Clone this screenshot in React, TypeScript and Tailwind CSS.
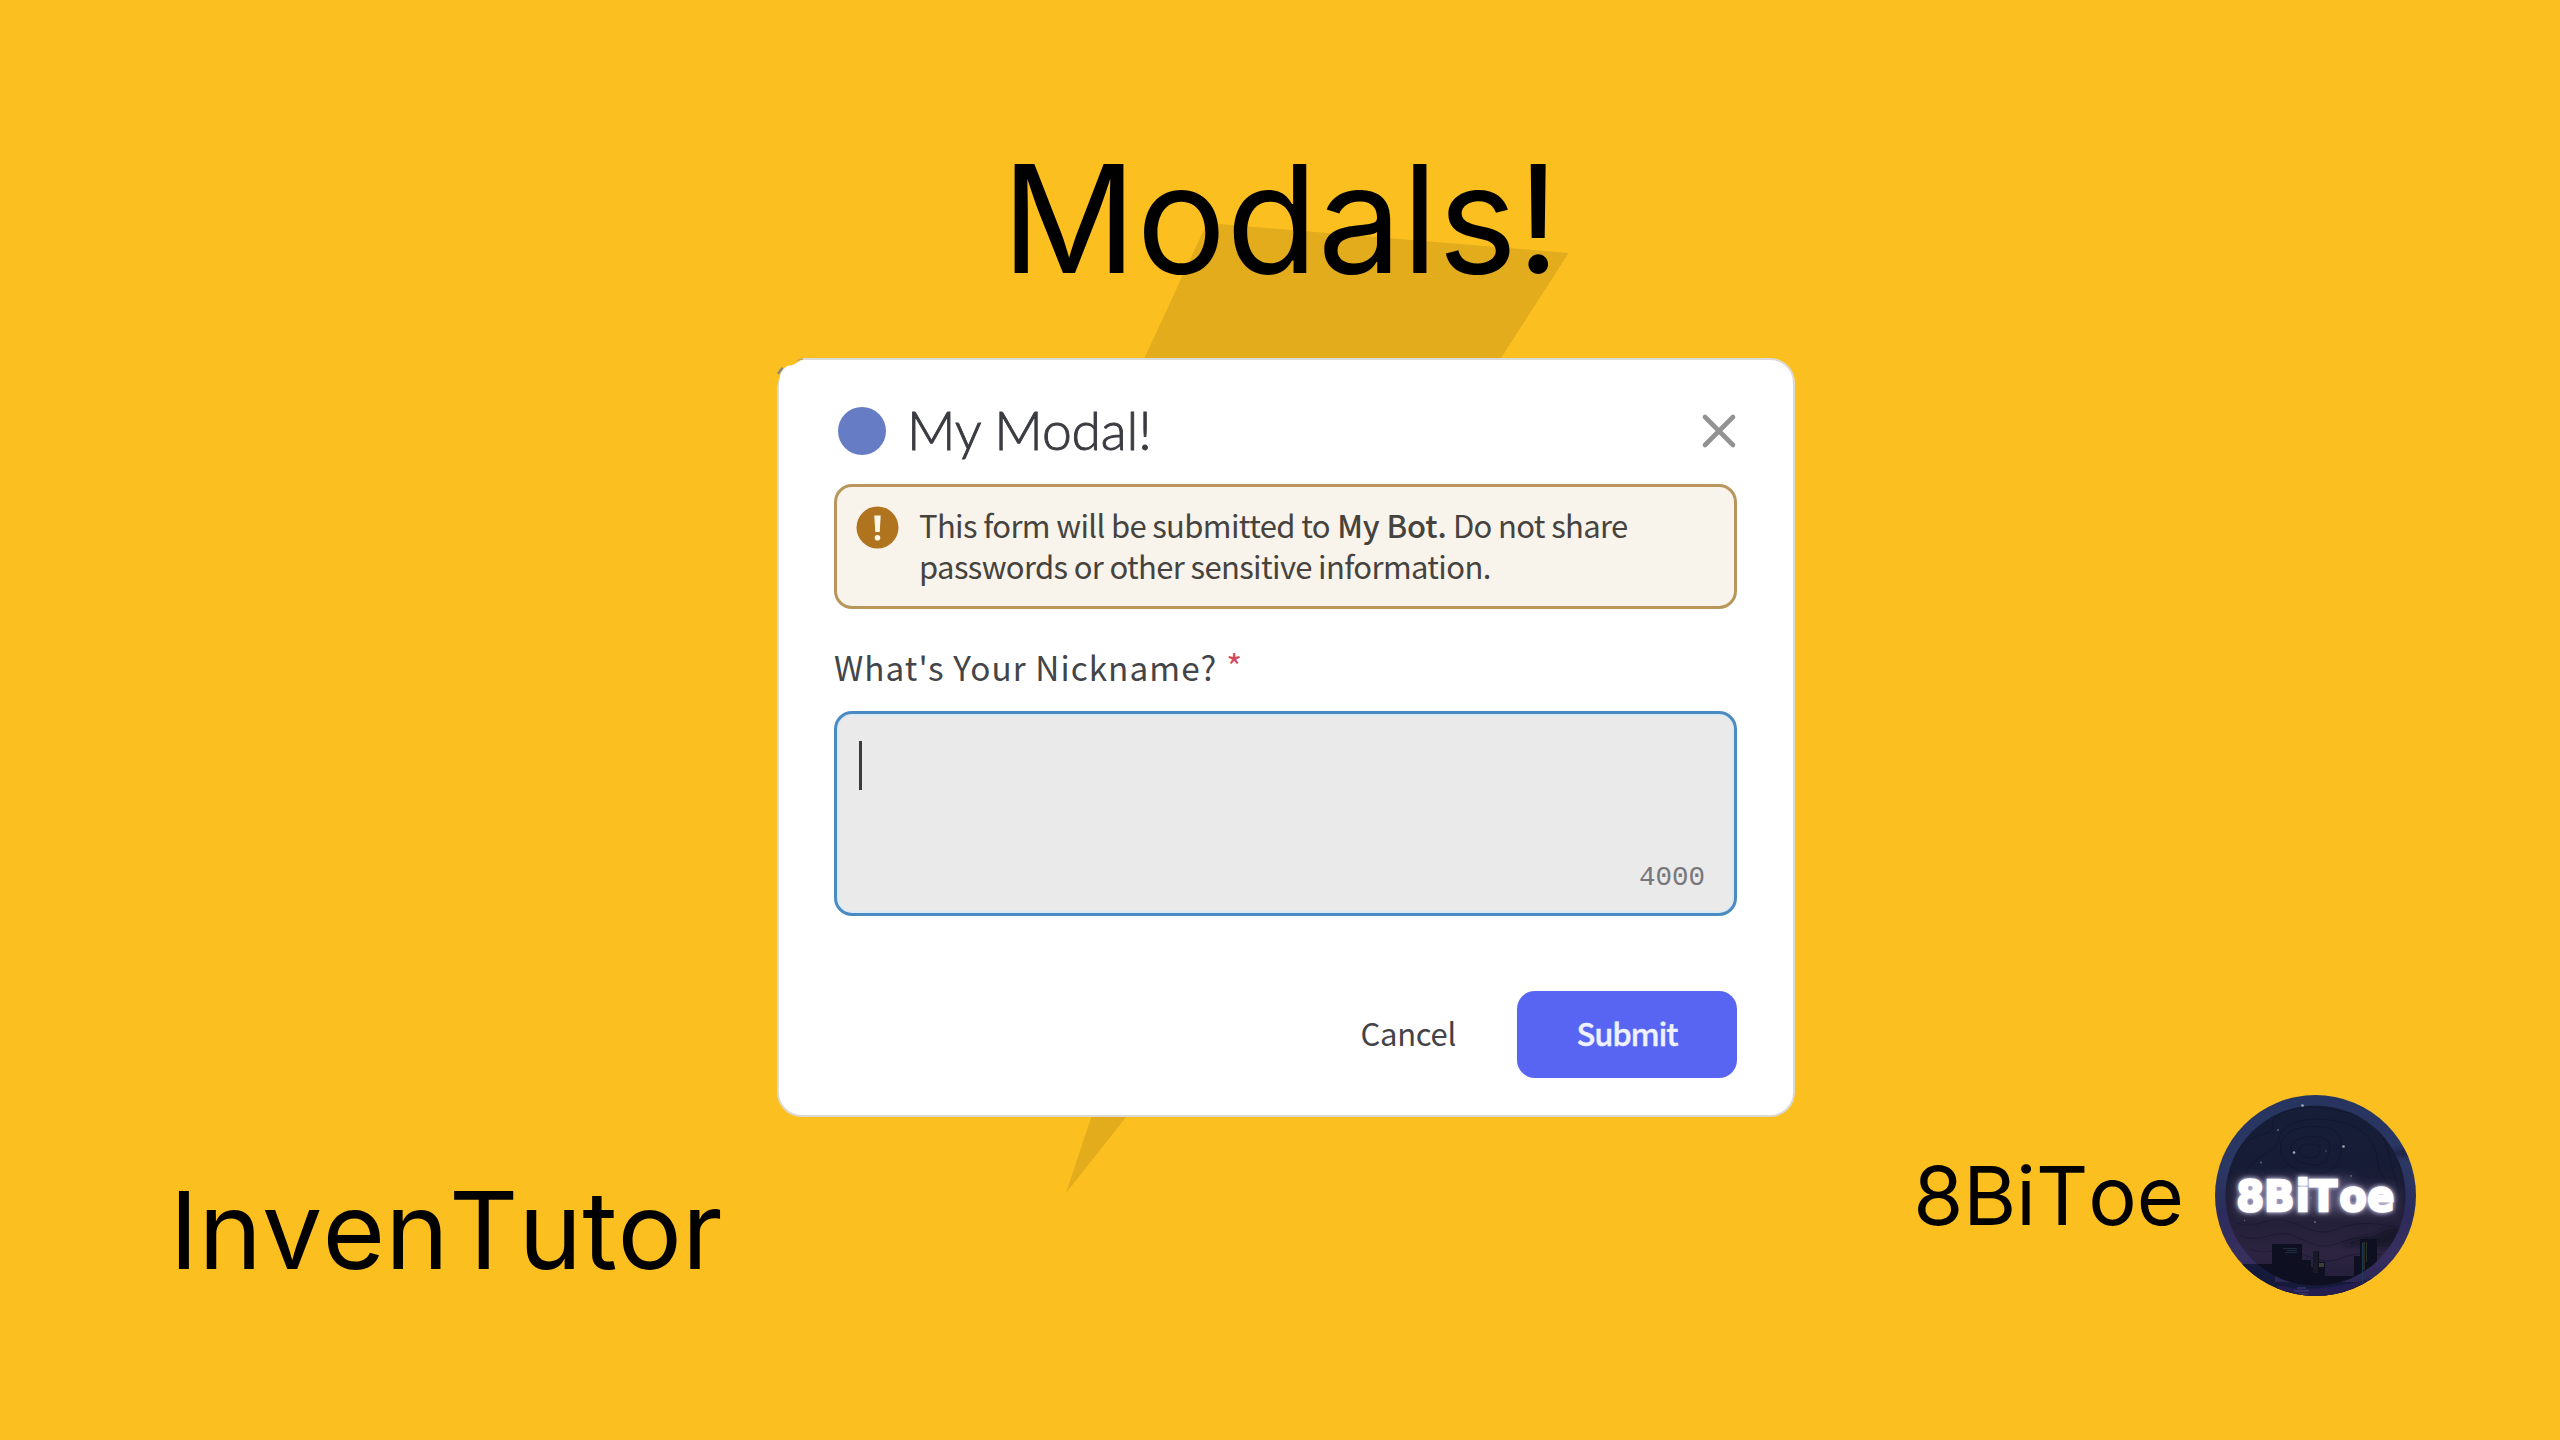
import React from 'react';

const stars: [number, number, number][] = [
  [87.5, 10.5, 1.3], [63, 35, 1], [79, 57.5, 1.3], [128.5, 51.5, 1.3], [46, 67.5, 1],
  [111, 56, 0.7], [136, 81, 0.9], [100, 127, 1], [29.5, 125.5, 0.7], [96, 103, 0.7],
];

const contours = [
  'M20 60c18-30 40-12 38-34 10-16 42-16 66-10 30 4 46 22 50 44 4 20 8 24 10 40',
  'M30 78c14-24 34-18 34-36 6-18 34-20 56-16 28 4 40 20 42 38 2 20 14 22 16 40',
  'M66 48c4-14 24-18 40-16 18 0 22 12 20 24s-6 22-24 22-40-8-36-30z',
  'M76 52c2-8 14-12 26-10 12 0 14 8 12 16s-6 12-16 12-24-6-22-18z',
  'M84 54c2-4 8-6 14-5 7 0 8 4 7 8s-4 6-9 6-14-3-12-9z',
  'M22 128c20 8 30-8 50-2s30 16 50 8 40-6 56-2',
  'M24 140c22 10 34-6 52 0s28 16 48 8 36-6 48-2',
  'M34 154c20 8 30-4 46 2s28 14 44 8 30-8 42-4',
];

function Avatar() {
  return (
    <svg className="block size-[201px]" viewBox="0 0 201 201" aria-label="8BiToe avatar">
      <defs>
        <linearGradient id="ring" x1="0" y1="0" x2="0" y2="1">
          <stop offset="0" stopColor="#26345f" />
          <stop offset="0.35" stopColor="#2b3864" />
          <stop offset="0.6" stopColor="#2c2c5c" />
          <stop offset="0.8" stopColor="#38305f" />
          <stop offset="1" stopColor="#252150" />
        </linearGradient>
        <linearGradient id="sky" x1="0" y1="0" x2="0" y2="1">
          <stop offset="0" stopColor="#151e38" />
          <stop offset="0.35" stopColor="#171c35" />
          <stop offset="0.6" stopColor="#231f38" />
          <stop offset="0.78" stopColor="#2c2440" />
          <stop offset="1" stopColor="#211c38" />
        </linearGradient>
        <clipPath id="outer"><circle cx="100.5" cy="100.5" r="100.5" /></clipPath>
        <clipPath id="inner"><circle cx="100.5" cy="100.5" r="90" /></clipPath>
        <filter id="soft" x="-30%" y="-60%" width="160%" height="220%"><feGaussianBlur stdDeviation="6" /></filter>
        <filter id="glow" x="-20%" y="-40%" width="140%" height="180%"><feGaussianBlur stdDeviation="2.2" /></filter>
      </defs>
      <g clipPath="url(#outer)">
        <rect width="201" height="201" fill="url(#ring)" />
        <ellipse cx="192" cy="58" rx="16" ry="4" fill="#1d2345" filter="url(#glow)" />
        <path d="M0 169h60v18h140v14H0z" fill="#151a3a" />
        <path d="M62 190c30 8 60 2 100-8l-20 19H62z" fill="#241e4e" />
        <path d="M82 193h9M79 196h15M84 199h9" stroke="#4a4c86" strokeWidth="0.8" />
        <g clipPath="url(#inner)">
          <rect width="201" height="201" fill="url(#sky)" />
          <g fill="none" stroke="#0c1126" strokeWidth="0.7" opacity="0.55">
            {contours.map((d) => <path key={d} d={d} />)}
          </g>
          <path d="M128 150c14-8 26-6 36-12s20-6 26-4v16c-16 4-40 0-62 0z" fill="#171428" opacity="0.8" filter="url(#glow)" />
          <path d="M0 169h57v-20h30v16h9v7h3v-16h5v11h6v14h29v-20h6v-17h17v60H0z" fill="#0e0f20" />
          <path d="M98 156h5v22h-5z" fill="#191a26" />
          <path d="M68 153.500h14M72 155.500h10M70 157.500h12" stroke="#233142" strokeWidth="0.9" />
          <path d="M104 168h5v4h-5z" fill="#3d3f37" />
          <path d="M149 147v28" stroke="#37351f" strokeWidth="1.4" />
          <path d="M151.500 147v20" stroke="#26302c" strokeWidth="1" />
        </g>
        <path d="M147.500 148v42" stroke="#20415a" strokeWidth="0.8" />
        {stars.map(([x, y, r]) => <circle key={`${x}-${y}`} cx={x} cy={y} r={r} fill="#aab3b9" opacity={r > 1.2 ? 0.95 : 0.5} />)}
        <path d="M22 84h116l2 9h40v24H22z" fill="#8e87ab" opacity="0.45" filter="url(#soft)" />
        <g transform="scale(0.92 1)" fontFamily="DejaVu Sans" fontWeight="700" fontSize="43">
          <text x="23.500 53.600 88 103.300 135.300 165.700" y="116.500" fill="#cfc9e8" stroke="#cfc9e8" strokeWidth="3.500" filter="url(#glow)" aria-hidden="true">8BiToe</text>
          <text x="23.500 53.600 88 103.300 135.300 165.700" y="116.500" fill="#ffffff" stroke="#ffffff" strokeWidth="2.600" strokeLinejoin="miter">8BiToe</text>
        </g>
      </g>
    </svg>
  );
}

function Bolt() {
  return (
    <svg className="absolute inset-0 size-full" viewBox="0 0 2560 1440" aria-hidden="true">
      <path d="M1207 223L1568.600 253L1501 358L1400 520L1460 695L1066 1193L1170 880L1030 760L1144.500 358Z" fill="#e2ac1d" />
    </svg>
  );
}

function Notice() {
  return (
    <div className="mt-[26px] flex h-[125px] rounded-[18px] border-3 border-[#b9965c] bg-[#f8f3eb] pt-[15px] pl-[19px]">
      <svg className="mt-1 size-[43px] shrink-0" viewBox="0 0 43 43" aria-hidden="true">
        <circle cx="21.500" cy="21.500" r="21" fill="#b0741f" />
        <path d="M18.300 9.500h6.400l-1 16.500h-4.400z" fill="#fff8e8" />
        <circle cx="21.500" cy="31.800" r="2.800" fill="#fff8e8" />
      </svg>
      <p className="mt-[1.500px] ml-[20px] text-[31px] leading-[41.5px] tracking-[-0.64px] whitespace-nowrap text-[#46433f]">
        This form will be submitted to <span className="ml-px font-medium tracking-[-0.1px]">My Bot.</span> Do not share
        <br />
        passwords or other sensitive information.
      </p>
    </div>
  );
}

function Modal() {
  return (
    <section className="relative mx-auto flex h-[759px] w-[1018px] translate-x-[6px] flex-col rounded-[25px] border-2 border-[#dcdad6] bg-white pr-[56px] pl-[55px] font-['Noto_Sans_CJK_SC',sans-serif]">
      <svg className="absolute -top-[3px] -left-[3px] size-[30px]" viewBox="0 0 30 30" aria-hidden="true">
        <path d="M0 0H27L25 3L17 8L11 9L5 14L3 22L1 30H0Z" fill="#fbbf20" />
        <path d="M2.500 16L6 11.500" stroke="#8d8a72" strokeWidth="2.500" strokeLinecap="round" />
        <path d="M21 4C23 2.500 24 2 27 2" stroke="#c9a95c" strokeWidth="1.500" fill="none" />
      </svg>
      <header className="mt-[38px] flex h-[60px] items-center">
        <div className="mt-[6px] ml-[3.500px] size-12 rounded-full bg-[#667dc6]" />
        <h2 className="mt-[2px] ml-[21.500px] font-['Lato',sans-serif] text-[53.5px] leading-[60px] font-light tracking-[-0.2px] text-[#3b3c42] [-webkit-text-stroke:0.9px_#3b3c42]">My Modal!</h2>
        <svg className="mt-[6px] ml-auto size-9" viewBox="0 0 36 36" aria-label="Close">
          <path d="M4 4L32 32M32 4L4 32" stroke="#929292" strokeWidth="4.600" strokeLinecap="round" />
        </svg>
      </header>
      <Notice />
      <label className="mt-[38px] flex h-10 text-[33.3px] leading-10 tracking-[1.05px] text-[#44454a]">
        What's Your Nickname?
        <span className="-mt-px ml-[9px] text-[34px] text-[#d24b62]">*</span>
      </label>
      <div className="mt-[24px] flex h-[205px] items-end justify-between rounded-[18px] border-3 border-[#4c8bc2] bg-[#eaeaea] shadow-[inset_0_0_2px_1px_#cfe9fb]">
        <span className="mb-[123px] ml-[22px] h-[49px] w-[3px] bg-[#3a3b3e]" />
        <span className="mr-[29px] mb-[20px] font-['Liberation_Mono',monospace] text-[27.5px] leading-[30px] text-[#77777c]">4000</span>
      </div>
      <footer className="mt-[74.5px] flex h-[88px] items-center justify-end">
        <button className="mr-[61px] pb-[3px] text-[31px] tracking-[-0.3px] text-[#434347]">Cancel</button>
        <button className="h-[87px] w-[220px] rounded-[18px] bg-[#5865f2] pb-[3px] text-[31px] font-medium tracking-[-1.2px] text-[#eef1ff] [-webkit-text-stroke:0.4px_#eef1ff]">Submit</button>
      </footer>
    </section>
  );
}

export default function App() {
  return (
    <main className="relative h-[1440px] w-[2560px] overflow-hidden bg-[#fbbf20] font-['Inter',sans-serif] text-black">
      <Bolt />
      <div className="relative flex h-full flex-col">
        <h1 className="h-[358px] pt-[138.5px] pl-[1001.500px] text-[149.5px] leading-[160px] [font-kerning:none]">Modals!</h1>
        <Modal />
        <footer className="-mt-[22px] flex items-start justify-between pr-[144px] pl-[169.500px]">
          <p className="mt-[75px] text-[107.5px] leading-[120px] tracking-[0.1px] [font-kerning:none]">InvenTutor</p>
          <div className="flex items-start gap-[31px]">
            <p className="mt-[55.5px] text-[81px] leading-[90px] [font-kerning:none]">8BiToe</p>
            <Avatar />
          </div>
        </footer>
      </div>
    </main>
  );
}
